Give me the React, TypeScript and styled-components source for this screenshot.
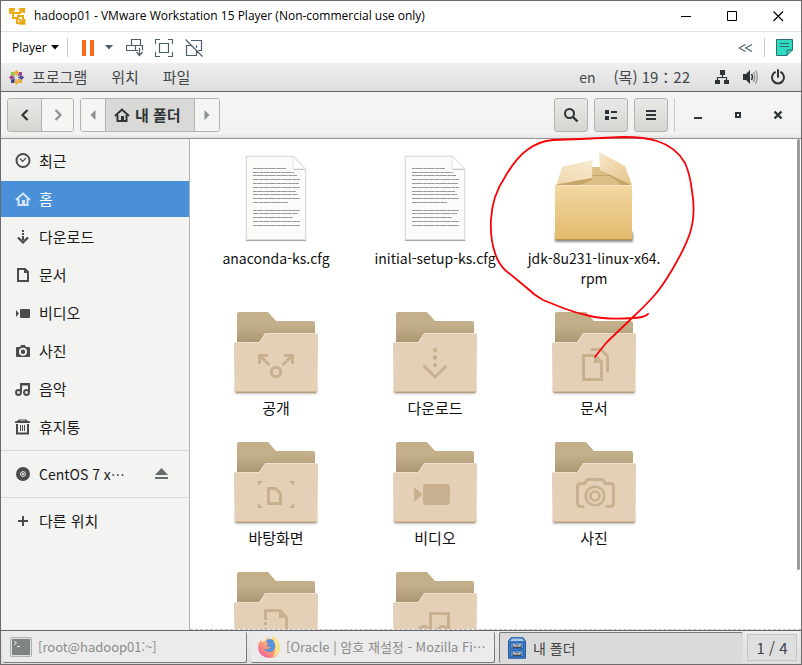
import React from "react";
import styled, { createGlobalStyle, css } from "styled-components";

const GlobalStyle = createGlobalStyle`
  *, *::before, *::after { box-sizing: border-box; }
  body { margin: 0; }
  button { font: inherit; color: inherit; background: none; border: 0; padding: 0; margin: 0; }
  a { color: inherit; text-decoration: none; }
  ul { list-style: none; margin: 0; padding: 0; }
  svg { display: block; flex: none; }
`;

const guestFont = '"Noto Sans CJK KR", "Noto Sans", sans-serif';

const Host = styled.div`
  height: 100vh;
  display: flex;
  flex-direction: column;
  border: 1px solid #6e6a6c;
  background: #fff;
  overflow: hidden;
`;

/* ---------- host window ---------- */

const TitleBar = styled.header`
  flex: none;
  height: 31px;
  display: flex;
  align-items: center;
  border-bottom: 1px solid #dfdfdf;
  padding-left: 8px;
  font-family: "Open Sans", sans-serif;
  color: #000;
`;

const Title = styled.h1`
  margin: 0 auto 0 8px;
  font-size: 12px;
  font-weight: 400;
  line-height: 16px;
  white-space: nowrap;
`;

const CaptionButton = styled.button`
  width: 46px;
  height: 28px;
  display: grid;
  place-items: center;
`;

const PlayerBar = styled.div`
  flex: none;
  height: 31px;
  display: flex;
  align-items: center;
  padding: 0 8px 0 11px;
  color: #4d5d6b;
  font-family: "Open Sans", sans-serif;
`;

const PlayerMenu = styled.button`
  display: flex;
  align-items: center;
  gap: 4px;
  font-size: 12px;
  line-height: 16px;
  color: #000;
`;

const Rule = styled.span<{ $gap: number; $height: number }>`
  flex: none;
  width: 1px;
  height: ${(p) => p.$height}px;
  margin: 0 ${(p) => p.$gap}px;
  background: #c9c9c9;
`;

const ToolButton = styled.button<{ $space?: number }>`
  display: grid;
  place-items: center;
  margin-right: ${(p) => p.$space ?? 0}px;
`;

const Push = styled.span`
  flex: 1;
`;

/* ---------- guest desktop ---------- */

const Guest = styled.div`
  flex: 1;
  min-height: 0;
  display: flex;
  flex-direction: column;
  font-family: ${guestFont};
  font-size: 15px;
  line-height: 20px;
`;

const TopPanel = styled.div`
  flex: none;
  height: 29px;
  display: flex;
  align-items: center;
  gap: 24px;
  padding: 0 15px 0 8px;
  background: linear-gradient(#efefef, #dedede);
  border-bottom: 1px solid #66615f;
  color: #42474a;
`;

const AppsButton = styled.button`
  display: flex;
  align-items: center;
  gap: 8px;
`;

const PanelButton = styled.button`
  white-space: nowrap;
`;

const Clock = styled.div`
  display: flex;
  gap: 18px;
`;

const InputSource = styled(PanelButton)`
  font-size: 14px;
`;

const StatusIcons = styled.div`
  display: flex;
  align-items: center;
  gap: 12px;
  color: #2e3436;
`;

const HeaderBar = styled.div`
  flex: none;
  height: 47px;
  display: flex;
  align-items: center;
  gap: 6px;
  padding: 0 6px;
  background: linear-gradient(#f5f5f5, #f2f2f2 42px, #e3e3e3);
  border-bottom: 1px solid #94918f;
  color: #2e3436;
`;

const Joined = styled.div`
  display: flex;
  height: 34px;
  border: 1px solid #b3b3ae;
  border-radius: 3px;
  overflow: hidden;
`;

const raised = css`
  background: linear-gradient(#e9e9e7, #d5d5d1);
`;

const Segment = styled.button<{ $width?: number; $raised?: boolean; $dim?: boolean }>`
  display: flex;
  align-items: center;
  justify-content: center;
  gap: 5px;
  width: ${(p) => (p.$width ? `${p.$width}px` : "auto")};
  padding: ${(p) => (p.$width ? 0 : "0 13px 0 8px")};
  font-weight: 700;
  background: #f5f5f4;
  color: ${(p) => (p.$dim ? "#8e9192" : "#2e3436")};
  & + & { border-left: 1px solid #b3b3ae; }
  ${(p) => p.$raised && raised}
`;

const CurrentFolder = styled(Segment)`
  background: #d9d9d7;
  border-left: 1px solid #b3b3ae;
`;

const SquareButton = styled.button`
  width: 34px;
  height: 34px;
  display: grid;
  place-items: center;
  border: 1px solid #b3b3ae;
  border-radius: 3px;
  ${raised}
`;

const WindowButton = styled.button`
  width: 34px;
  height: 34px;
  display: grid;
  place-items: center;
`;

const Body = styled.div`
  flex: 1;
  min-height: 0;
  display: flex;
`;

const Sidebar = styled.nav`
  flex: none;
  width: 189px;
  display: flex;
  flex-direction: column;
  gap: 2px;
  padding-top: 4px;
  background: #f3f3f2;
  border-right: 1px solid #b4b3b1;
`;

const Places = styled.ul`
  display: flex;
  flex-direction: column;
  gap: 2px;
`;

const Place = styled.a<{ $active?: boolean }>`
  height: 36px;
  display: flex;
  align-items: center;
  gap: 8px;
  padding: 0 20px 0 14px;
  background: ${(p) => (p.$active ? "#4a90d9" : "transparent")};
  color: ${(p) => (p.$active ? "#fff" : "#1a1a1a")};
  svg { color: ${(p) => (p.$active ? "#d4e5f7" : "#4a4b4a")}; }
`;

const PlaceName = styled.span<{ $latin?: boolean }>`
  flex: 1;
  white-space: nowrap;
  font-size: ${(p) => (p.$latin ? 14 : 15)}px;
`;

const VolumeRow = styled.div`
  display: flex;
  align-items: center;
  justify-content: space-between;
  padding-right: 21px;
  color: #666b6c;
`;

const Divider = styled.hr`
  width: 100%;
  height: 1px;
  border: 0;
  margin: 3px 0;
  background: #d8d8d6;
`;

const FilesPane = styled.main`
  flex: 1;
  min-width: 0;
  position: relative;
  background: #fff;
`;

const FilesScroller = styled.div`
  height: 100%;
  display: flex;
  overflow: hidden;
  border-bottom: 1px dashed #bdbdbd;
`;

const FileGrid = styled.ul`
  flex: 1;
  display: grid;
  grid-template-columns: repeat(auto-fill, 158px);
  gap: 14px 1px;
  align-content: start;
  padding: 13px 0 0 7px;
`;

const FileButton = styled.button`
  width: 100%;
  display: flex;
  flex-direction: column;
  align-items: center;
  color: #111;
`;

const FileName = styled.span<{ $latin: boolean }>`
  max-width: 144px;
  text-align: center;
  font-size: ${(p) => (p.$latin ? 14 : 15)}px;
`;

const Thumb = styled.div`
  flex: none;
  width: 3px;
  height: 88%;
  margin-right: 1px;
  border-radius: 2px;
  background: #9c9e9d;
`;

const PenMarks = styled.svg`
  position: absolute;
  left: 290px;
  top: -9px;
  z-index: 2;
  pointer-events: none;
`;

const TaskBar = styled.footer`
  flex: none;
  height: 34px;
  display: flex;
  gap: 4px;
  padding: 1px 4px 1px 2px;
  border-top: 1px solid #696466;
  background: linear-gradient(#ececec, #dedede);
`;

const Task = styled.button<{ $active?: boolean }>`
  flex: 1;
  min-width: 0;
  display: flex;
  align-items: center;
  gap: 6px;
  padding-left: 7px;
  text-align: left;
  font-size: ${(p) => (p.$active ? 14 : 13)}px;
  border-radius: 2px;
  color: ${(p) => (p.$active ? "#3f4345" : "#8b8b8b")};
  background: ${(p) => (p.$active ? "#dadada" : "#ebebeb")};
  border-style: solid;
  border-color: #7c7c7c;
  border-width: ${(p) => (p.$active ? "1px 0 0 1px" : "0 1px 1px 0")};
`;

const TaskName = styled.span`
  white-space: nowrap;
`;

const Pager = styled.button`
  flex: none;
  width: 50px;
  height: 27px;
  margin-top: 2px;
  border: 1px solid #c4c4c4;
  background: #dfdfdf;
  color: #3f4345;
  font-size: 15px;
`;

/* ---------- drawings ---------- */

type GlyphProps = { size?: number; children: React.ReactNode };
const Glyph = ({ size = 16, children }: GlyphProps) => (
  <svg width={size} height={size} viewBox={`0 0 ${size} ${size}`} fill="currentColor" aria-hidden="true">
    {children}
  </svg>
);

const Outline = ({ d, w = 2, ...rest }: { d: string; w?: number } & React.SVGProps<SVGPathElement>) => (
  <path d={d} fill="none" stroke="currentColor" strokeWidth={w} {...rest} />
);

const VmLogo = () => (
  <svg width="17" height="17" viewBox="0 0 17 17" fill="none" stroke="#edaa13" strokeWidth="2.4" aria-hidden="true">
    <path d="M1.200 6V1.200H6M10 1.200H15V5M15.300 11V15.500H10M2 2L5 5M14 2L9 6M14 15L10 11" />
    <path d="M9 5H4V10H9V7M8 10V15H14V8H10" strokeWidth="2" />
  </svg>
);

const HomeGlyph = () => (
  <Glyph>
    <Outline d="M1 9L8 2.5L15 9" w={2} />
    <Outline d="M3.5 8V14H12.5V8" w={2} />
    <path d="M7 9h3v5H7z" />
  </Glyph>
);

const placeGlyphs: Record<string, React.ReactNode> = {
  recent: (
    <Glyph>
      <circle cx="8" cy="7.500" r="6.500" fill="none" stroke="currentColor" strokeWidth="2" />
      <Outline d="M5 5.5L7.7 8.3L11 5" w={1.2} />
    </Glyph>
  ),
  home: <HomeGlyph />,
  download: (
    <Glyph>
      <path d="M7 1h2v2H7zM7 4h2v2H7zM7 7h2v4H7z" />
      <Outline d="M3 8.5L8 13.3L13 8.5" w={2.4} />
    </Glyph>
  ),
  document: (
    <Glyph>
      <Outline d="M3 2H10L13 5V14H3Z" w={2} />
      <path d="M9 2v4h4z" />
    </Glyph>
  ),
  video: (
    <Glyph>
      <rect x="5" y="4" width="10" height="9" rx="1" />
      <path d="M1 5l3 3.5L1 12z" />
    </Glyph>
  ),
  photo: (
    <Glyph>
      <path
        fillRule="evenodd"
        d="M2 4H5L6 2H10L11 4H14Q15 4 15 5V13Q15 14 14 14H2Q1 14 1 13V5Q1 4 2 4ZM8 4.8A4 4 0 1 0 8 12.8A4 4 0 1 0 8 4.8ZM8 6.6A2.2 2.2 0 1 1 8 11A2.2 2.2 0 1 1 8 6.6Z"
      />
    </Glyph>
  ),
  music: (
    <Glyph>
      <circle cx="3.5" cy="11.5" r="2.4" fill="none" stroke="currentColor" strokeWidth="2" />
      <circle cx="11.5" cy="11.5" r="2.4" fill="none" stroke="currentColor" strokeWidth="2" />
      <Outline d="M6 11V3H14V11" />
      <path d="M5 2h10v2.5H5z" />
    </Glyph>
  ),
  trash: (
    <Glyph>
      <path d="M0 2.5Q3 2 4 .5H11Q12 2 15 2.5V4H0z" />
      <path d="M5 2h5v-.5H5z" fill="#f3f3f2" />
      <Outline d="M2 5V14.5H13V5" w={2} />
      <Outline d="M5.5 6V12M7.5 6V12M9.5 6V12" w={1} />
    </Glyph>
  ),
  disc: (
    <Glyph>
      <circle cx="8" cy="8" r="7" />
      <circle cx="8" cy="8" r="2.4" fill="none" stroke="#f3f3f2" strokeWidth="1" />
      <circle cx="8" cy="8" r="1" fill="#f3f3f2" />
    </Glyph>
  ),
  plus: (
    <Glyph>
      <path d="M7 3h2v4h4v2H9v4H7V9H3V7h4z" />
    </Glyph>
  ),
};

const PageFile = () => {
  const lines: [number, number][] = [
    [17, 33], [21, 41], [24, 44], [28, 47], [32, 46], [36, 47], [40, 43], [43, 45], [47, 47], [51, 35],
    [59, 47], [62, 45], [66, 40], [70, 47], [74, 47],
  ];
  return (
    <svg width="96" height="96" viewBox="0 0 96 96" aria-hidden="true">
      <path d="M17.5 3.5H66L78.5 17V89.5H17.5Z" fill="#000" opacity=".09" />
      <path d="M18.5 4.5H65L77.5 17V87.5H18.5Z" fill="#fbfbfa" stroke="#dcdcda" />
      <path d="M18 88.5H78" stroke="#a9a9a7" />
      <path d="M65 4.5V17H77.5Z" fill="#fff" stroke="#e2e2e0" />
      <path d="M66 17.5H77" stroke="#c6c6c4" />
      {lines.map(([y, w], i) => (
        <g key={y}>
          <path d={`M25 ${y - 1}.5h${w}`} stroke="#b4b4b4" />
          <path d={`M25 ${y - 1}.5h${w}`} stroke="#989898" strokeDasharray={i % 2 ? "5 2 3 1" : "3 1 6 2"} />
        </g>
      ))}
    </svg>
  );
};

const PackageFile = () => (
  <svg width="96" height="96" viewBox="0 0 96 96" aria-hidden="true">
    <defs>
      <linearGradient id="boxFront" x1="0" y1="0" x2="0" y2="1">
        <stop offset="0" stopColor="#f2d8a2" />
        <stop offset="1" stopColor="#e2b96c" />
      </linearGradient>
      <linearGradient id="flapLeft" x1="0" y1="1" x2="1" y2="0">
        <stop offset="0" stopColor="#efd7ac" />
        <stop offset="1" stopColor="#f8ead0" />
      </linearGradient>
      <linearGradient id="flapRight" x1="0" y1="0" x2="1" y2="1">
        <stop offset="0" stopColor="#f8e8c8" />
        <stop offset="1" stopColor="#e5c48a" />
      </linearGradient>
      <filter id="boxShade" x="-10%" y="-10%" width="120%" height="130%">
        <feGaussianBlur stdDeviation="1.3" />
      </filter>
    </defs>
    <path d="M9 80H87V90H9Z" fill="#000" opacity=".45" filter="url(#boxShade)" />
    <path d="M11 33L17 15H78L85 33Z" fill="#dcbe84" />
    <path d="M45 23.5H68" stroke="#c6a66b" />
    <path d="M11 33L46 26V28L34 33ZM60 21L85 33H76Z" fill="#a68950" opacity=".45" />
    <rect x="9" y="33" width="77" height="55" rx="1" fill="url(#boxFront)" />
    <path d="M9 33.5H86" stroke="#f9e6bd" />
    <path d="M9 87.5H86" stroke="#b98f47" />
    <path d="M10.5 33L16 15L46.5 8L46 26Z" fill="url(#flapLeft)" />
    <path d="M53 0L79 14L86 33L54 18Z" fill="url(#flapRight)" />
    <path d="M10.5 33L46 26.500" stroke="#c9a463" />
  </svg>
);

const emblems: Record<string, React.ReactNode> = {
  share: (
    <>
      <path d="M31.500 62V53.500H40M32 54L41.500 63M64.500 62V53.500H56M64 54L54.500 63" />
      <circle cx="48" cy="70" r="4.700" />
    </>
  ),
  download: (
    <>
      <path d="M37.500 64.500L48 75L58.500 64.500" strokeLinecap="round" />
      <path d="M48 48V48.010M48 55.500V55.510M48 63V63.010" strokeWidth="4.500" strokeLinecap="round" />
    </>
  ),
  documents: (
    <>
      <path d="M37.500 53.500H49L55.500 60V77.500H37.500Z" />
      <path d="M48 53V61H56Z" fill="#c8b090" stroke="none" />
      <path d="M46 47.500H55L61.500 54V69" strokeLinecap="round" />
    </>
  ),
  desktop: (
    <>
      <path d="M30 49h5l-5 5zM66 49h-5l5 5zM30 76h5l-5-5zM66 76h-5l5-5z" fill="#c8b090" stroke="none" />
      <path d="M40.500 56.500H47.500L52.500 61.500V71.500H40.500Z" />
    </>
  ),
  video: <path d="M39 52H60Q63 52 63 55V70Q63 73 60 73H39Q36 73 36 70V55Q36 52 39 52ZM27 55L35.500 62.500L27 70Z" fill="#c8b090" stroke="none" />,
  camera: (
    <>
      <path
        d="M37 74.500H35Q31.500 74.500 31.500 71V55Q31.500 51.500 35 51.500H38.500L41.500 47.500H56.500L59.500 51.500H64Q67.500 51.500 67.500 55V71Q67.500 74.500 64 74.500H61"
        strokeLinecap="round"
        strokeLinejoin="round"
      />
      <circle cx="49" cy="64" r="9.300" strokeWidth="2.600" />
      <circle cx="49" cy="64" r="4.500" strokeWidth="2.600" />
    </>
  ),
  template: (
    <>
      <path d="M37.500 58V48.500H52L58.500 55V78" />
      <path d="M51 47V56H60Z" fill="#c8b090" stroke="none" />
      <path d="M37.500 60V78" strokeDasharray="3 3" />
    </>
  ),
  music: (
    <>
      <path d="M43.500 72V51.500H61.500V72" />
      <circle cx="37" cy="70" r="5.500" />
      <circle cx="56" cy="70" r="5.500" />
    </>
  ),
};

const Folder = ({ emblem }: { emblem: string }) => (
  <svg width="96" height="96" viewBox="0 0 96 96" aria-hidden="true">
    <defs>
      <linearGradient id="folderBack" x1="0" y1="0" x2="0" y2="1">
        <stop offset=".4" stopColor="#c3b08b" />
        <stop offset="1" stopColor="#a99470" />
      </linearGradient>
      <filter id="folderShade" x="-10%" y="-50%" width="120%" height="200%">
        <feGaussianBlur stdDeviation="1.2" />
      </filter>
    </defs>
    <rect x="7" y="84" width="82" height="8" fill="#000" opacity=".25" filter="url(#folderShade)" />
    <path d="M9 12Q9 10 11 10H40L48 19H85Q87 19 87 21V42H9Z" fill="url(#folderBack)" />
    <path d="M6 42Q6 40 8 40H31L37 31H88Q90 31 90 33L89.500 89Q89.500 91 87 91H9Q6.500 91 6.500 89Z" fill="#e3d0b6" />
    <path d="M7 40.500H31.500L37.500 31.500H89" fill="none" stroke="#ecdfcc" />
    <path d="M8 90.500H88" stroke="#b89d7a" />
    <path d="M7 89.500H89" stroke="#d3bc9b" />
    <g fill="none" stroke="#c8b090" strokeWidth="3">{emblems[emblem]}</g>
  </svg>
);

const Firefox = () => (
  <svg width="22" height="22" viewBox="0 0 22 22" aria-hidden="true">
    <defs>
      <linearGradient id="fox" x1="1" y1="0" x2=".2" y2="1">
        <stop offset="0" stopColor="#fff08a" />
        <stop offset=".45" stopColor="#ffb26b" />
        <stop offset="1" stopColor="#f0609c" />
      </linearGradient>
    </defs>
    <path d="M3 4L4 6L7 5L9 2L14 3L15 0Q22 5 22 12Q21 22 11 22Q1 21 0 12Q0 7 3 4Z" fill="url(#fox)" />
    <path d="M8 5Q12 1 16 5Q19 11 15 15Q10 18 6 13L11 13L12 11L8 10L10 8Z" fill="#5a93dc" />
    <path d="M15 0Q22 5 22 12Q21 19 15 21Q19 14 17 8Q15 4 15 0Z" fill="#fbe489" />
  </svg>
);

const Terminal = () => (
  <svg width="22" height="20" viewBox="0 0 22 20" aria-hidden="true">
    <rect x=".5" y=".5" width="21" height="19" rx="1" fill="#dcdcda" stroke="#b2b2b0" />
    <rect x="2" y="2" width="18" height="16" fill="#7d8482" />
    <path d="M4 4L6.500 6L4 8M7 9.500H10" fill="none" stroke="#eee" />
  </svg>
);

const Cabinet = () => (
  <svg width="20" height="22" viewBox="0 0 20 22" aria-hidden="true">
    <path d="M1.500 4L4 .7H16L18.500 4V21.300H1.500Z" fill="#3f7dc6" stroke="#2a5d9f" />
    <path d="M3 4L5 1.500H15L17 4Z" fill="#a8c8ea" />
    <path d="M3.500 5.500H16.500V11.500H3.500ZM3.500 13.500H16.500V19.500H3.500Z" fill="#5b94d6" stroke="#2a62a8" />
    <path d="M7 7V9.500H13V7M7 15V17.500H13V15" fill="none" stroke="#34322f" strokeWidth="2.500" />
    <path d="M7 7V9H13V7M7 15V17H13V15" fill="none" stroke="#fff" strokeWidth="1.200" />
  </svg>
);

const CentosMark = () => (
  <svg width="15" height="15" viewBox="0 0 15 15" aria-hidden="true">
    <path d="M7.500 0L10 2.500L7.500 6L5 2.500Z" fill="#eca83a" />
    <path d="M15 7.500L12.500 10L9 7.500L12.500 5Z" fill="#55499b" />
    <path d="M7.500 15L5 12.500L7.500 9L10 12.500Z" fill="#edb041" />
    <path d="M0 7.500L2.500 5L6 7.500L2.500 10Z" fill="#a13f86" />
    <path d="M2 2H5L6.500 6.500L2 5Z" fill="#9bc43d" />
    <path d="M13 2V5L8.500 6.500L10 2Z" fill="#9a4a97" />
    <path d="M13 13H10L8.500 8.500L13 10Z" fill="#eaa93a" />
    <path d="M2 13V10L6.500 8.500L5 13Z" fill="#3f4791" />
  </svg>
);

const Caret = () => (
  <svg width="8" height="5" viewBox="0 0 8 5" fill="currentColor" aria-hidden="true">
    <path d="M0 0H8L4 4.500Z" />
  </svg>
);

/* ---------- data ---------- */

const places = [
  { icon: "recent", name: "최근" },
  { icon: "home", name: "홈", active: true },
  { icon: "download", name: "다운로드" },
  { icon: "document", name: "문서" },
  { icon: "video", name: "비디오" },
  { icon: "photo", name: "사진" },
  { icon: "music", name: "음악" },
  { icon: "trash", name: "휴지통" },
];

const files: { name: string; label?: React.ReactNode; latin?: boolean; icon: React.ReactNode }[] = [
  { name: "anaconda-ks.cfg", latin: true, icon: <PageFile /> },
  { name: "initial-setup-ks.cfg", latin: true, icon: <PageFile /> },
  { name: "jdk-8u231-linux-x64.rpm", latin: true, label: <>jdk-8u231-linux-x64.<wbr />rpm</>, icon: <PackageFile /> },
  { name: "공개", icon: <Folder emblem="share" /> },
  { name: "다운로드", icon: <Folder emblem="download" /> },
  { name: "문서", icon: <Folder emblem="documents" /> },
  { name: "바탕화면", icon: <Folder emblem="desktop" /> },
  { name: "비디오", icon: <Folder emblem="video" /> },
  { name: "사진", icon: <Folder emblem="camera" /> },
  { name: "", icon: <Folder emblem="template" /> },
  { name: "", icon: <Folder emblem="music" /> },
];

const tasks = [
  { icon: <Terminal />, name: "[root@hadoop01:~]" },
  { icon: <Firefox />, name: "[Oracle | 암호 재설정 - Mozilla Fi⋯" },
  { icon: <Cabinet />, name: "내 폴더", active: true },
];

export default function App() {
  return (
    <Host lang="ko">
      <GlobalStyle />
      <TitleBar>
        <VmLogo />
        <Title>hadoop01 - VMware Workstation 15 Player (Non-commercial use only)</Title>
        <CaptionButton aria-label="Minimize">
          <Glyph size={11}><path d="M0 5h10v1H0z" /></Glyph>
        </CaptionButton>
        <CaptionButton aria-label="Maximize">
          <Glyph size={11}><Outline d="M.5.5H9.500V9.500H.5Z" w={1} /></Glyph>
        </CaptionButton>
        <CaptionButton aria-label="Close">
          <Glyph size={11}><Outline d="M.5.5L10 10M10 .5L.5 10" w={1.2} /></Glyph>
        </CaptionButton>
      </TitleBar>

      <PlayerBar>
        <PlayerMenu>Player <Caret /></PlayerMenu>
        <Rule $gap={8} $height={19} />
        <ToolButton aria-label="Pause" $space={3}>
          <svg width="26" height="16" viewBox="0 0 26 16" aria-hidden="true">
            <path d="M6 0h4v16H6zM14 0h4v16h-4z" fill="#fb6a1c" />
          </svg>
        </ToolButton>
        <ToolButton aria-label="Power options" $space={13}><Caret /></ToolButton>
        <ToolButton aria-label="Send Ctrl+Alt+Del" $space={11}>
          <Glyph size={18}>
            <Outline d="M5.500 6.500V.5H14.500V6.500M.5 6.500H9.500V11.500H.5ZM9.500 6.500H16.500V11.500M13.500 9V16M10.500 13L13.500 16.500L16.500 13M9.500 11.500H12" w={1.2} />
          </Glyph>
        </ToolButton>
        <ToolButton aria-label="Full screen" $space={12}>
          <Glyph size={18}>
            <Outline d="M.5 5V.5H5M13 .5H17.500V5M17.500 13V17.500H13M5 17.500H.5V13M4.500 4.500H13.500V13.500H4.500Z" w={1.2} />
          </Glyph>
        </ToolButton>
        <ToolButton aria-label="Unity">
          <Glyph size={18}>
            <Outline d="M6 1.500H16.500V11.500H13M1.500 6V16.500H11.500V12M1.500 6.500H6M.5.5L17.500 17.500M11.500 6.500V9" w={1.2} />
          </Glyph>
        </ToolButton>
        <Push />
        <ToolButton aria-label="Collapse toolbar">
          <svg width="15" height="8" viewBox="0 0 15 8" aria-hidden="true">
            <Outline d="M7.500.5L1 4L7.500 7.500M14 .5L7.500 4L14 7.500" w={1.1} />
          </svg>
        </ToolButton>
        <Rule $gap={11} $height={19} />
        <ToolButton aria-label="Notes">
          <svg width="17" height="17" viewBox="0 0 17 17" aria-hidden="true">
            <path d="M.5.5H16.500V11L11 16.500H.5Z" fill="#2fdcc0" stroke="#2b6f74" />
            <path d="M16.500 11H11V16.500M3.500 4.500H13M3.500 7.500H13" fill="none" stroke="#2b6f74" />
          </svg>
        </ToolButton>
      </PlayerBar>

      <Guest>
        <TopPanel>
          <AppsButton><CentosMark />프로그램</AppsButton>
          <PanelButton>위치</PanelButton>
          <PanelButton>파일</PanelButton>
          <Push />
          <Clock>
            <InputSource>en</InputSource>
            <PanelButton>(목) 19：22</PanelButton>
          </Clock>
          <StatusIcons>
            <Glyph>
              <path d="M6 1h5v5H6zM1 11h5v4H1zM10 11h5v4h-5z" />
              <Outline d="M8.500 6V8.500M3.500 11V8.500H12.500V11" w={1.2} />
            </Glyph>
            <Glyph>
              <path d="M1 5h3l4-4v14l-4-4H1z" />
              <Outline d="M9.500 5Q11.500 8 9.500 11" w={1.5} />
              <Outline d="M11.500 3Q14 8 11.500 13M13.500 1.500Q17 8 13.500 14.500" w={1.3} opacity={0.45} />
            </Glyph>
            <Glyph>
              <Outline d="M5 3.200A6 6 0 1 0 11 3.200M8 1V8" w={2} strokeLinecap="round" />
            </Glyph>
          </StatusIcons>
        </TopPanel>

        <HeaderBar>
          <Joined>
            <Segment $width={33} $raised aria-label="뒤로">
              <Glyph><Outline d="M10.500 3L5.500 8L10.500 13" w={2.2} /></Glyph>
            </Segment>
            <Segment $width={32} $dim aria-label="앞으로">
              <Glyph><Outline d="M5.500 3L10.500 8L5.500 13" w={2.2} /></Glyph>
            </Segment>
          </Joined>
          <Joined>
            <Segment $width={24} $dim aria-label="상위 경로">
              <Glyph><path d="M10.500 3v10l-5-5z" /></Glyph>
            </Segment>
            <CurrentFolder><HomeGlyph />내 폴더</CurrentFolder>
            <Segment $width={25} $dim aria-label="하위 경로">
              <Glyph><path d="M5.500 3v10l5-5z" /></Glyph>
            </Segment>
          </Joined>
          <Push />
          <SquareButton aria-label="검색">
            <Glyph>
              <circle cx="6.500" cy="6.500" r="4.500" fill="none" stroke="currentColor" strokeWidth="2" />
              <Outline d="M10 10L14.500 14.500" w={2.4} />
            </Glyph>
          </SquareButton>
          <SquareButton aria-label="보기 방식">
            <Glyph><path d="M2 3h4v4H2zM2 9h4v4H2zM8 4h6v2H8zM8 10h6v2H8z" /></Glyph>
          </SquareButton>
          <SquareButton aria-label="메뉴">
            <Glyph><path d="M3 3h10v2H3zM3 7h10v2H3zM3 11h10v2H3z" /></Glyph>
          </SquareButton>
          <Rule $gap={0} $height={34} />
          <WindowButton aria-label="최소화">
            <Glyph><path d="M4 10h8v2H4z" /></Glyph>
          </WindowButton>
          <WindowButton aria-label="최대화">
            <Glyph><Outline d="M6 6H10V10H6Z" w={2} /></Glyph>
          </WindowButton>
          <WindowButton aria-label="닫기">
            <Glyph><Outline d="M4.500 4.500L11.500 11.500M11.500 4.500L4.500 11.500" w={2.4} /></Glyph>
          </WindowButton>
        </HeaderBar>

        <Body>
          <Sidebar aria-label="위치">
            <Places>
              {places.map((p) => (
                <li key={p.name}>
                  <Place href="#" $active={p.active} aria-current={p.active ? "page" : undefined}>
                    {placeGlyphs[p.icon]}
                    <PlaceName>{p.name}</PlaceName>
                  </Place>
                </li>
              ))}
            </Places>
            <Divider />
            <VolumeRow>
              <Place href="#">{placeGlyphs.disc}<PlaceName $latin>CentOS 7 x⋯</PlaceName></Place>
              <ToolButton aria-label="꺼내기">
                <svg width="13" height="12" viewBox="0 0 13 12" fill="currentColor" aria-hidden="true">
                  <path d="M6.500 0L13 7H0zM0 9h13v2H0z" />
                </svg>
              </ToolButton>
            </VolumeRow>
            <Divider />
            <Place href="#">{placeGlyphs.plus}<PlaceName>다른 위치</PlaceName></Place>
          </Sidebar>

          <FilesPane>
            <FilesScroller>
              <FileGrid>
                {files.map((f, i) => (
                  <li key={i}>
                    <FileButton>
                      {f.icon}
                      <FileName $latin={Boolean(f.latin)}>{f.label ?? f.name}</FileName>
                    </FileButton>
                  </li>
                ))}
              </FileGrid>
              <Thumb />
            </FilesScroller>
            <PenMarks width="230" height="240" viewBox="0 0 230 240" aria-hidden="true">
              <path
                d="M168 184Q164 188 152 188Q128 190 110 186Q96 183 83 178L63 170Q54 165 47 158L25 140Q18 133 15 123Q10 108 11 90Q12 66 25 47Q36 28 47 20Q59 11 73 10L100 9L143 7Q165 7 177 11Q196 17 205 33Q210 44 212 61Q216 84 210 103Q205 118 192 140Q182 157 173 167Q163 178 152 188L127 212Q121 219 115 227"
                fill="none"
                stroke="#fb0207"
                strokeWidth="1.800"
                strokeLinecap="round"
                strokeLinejoin="round"
              />
            </PenMarks>
          </FilesPane>
        </Body>

        <TaskBar>
          {tasks.map((t) => (
            <Task key={t.name} $active={t.active}>
              {t.icon}
              <TaskName>{t.name}</TaskName>
            </Task>
          ))}
          <Pager>1 / 4</Pager>
        </TaskBar>
      </Guest>
    </Host>
  );
}
